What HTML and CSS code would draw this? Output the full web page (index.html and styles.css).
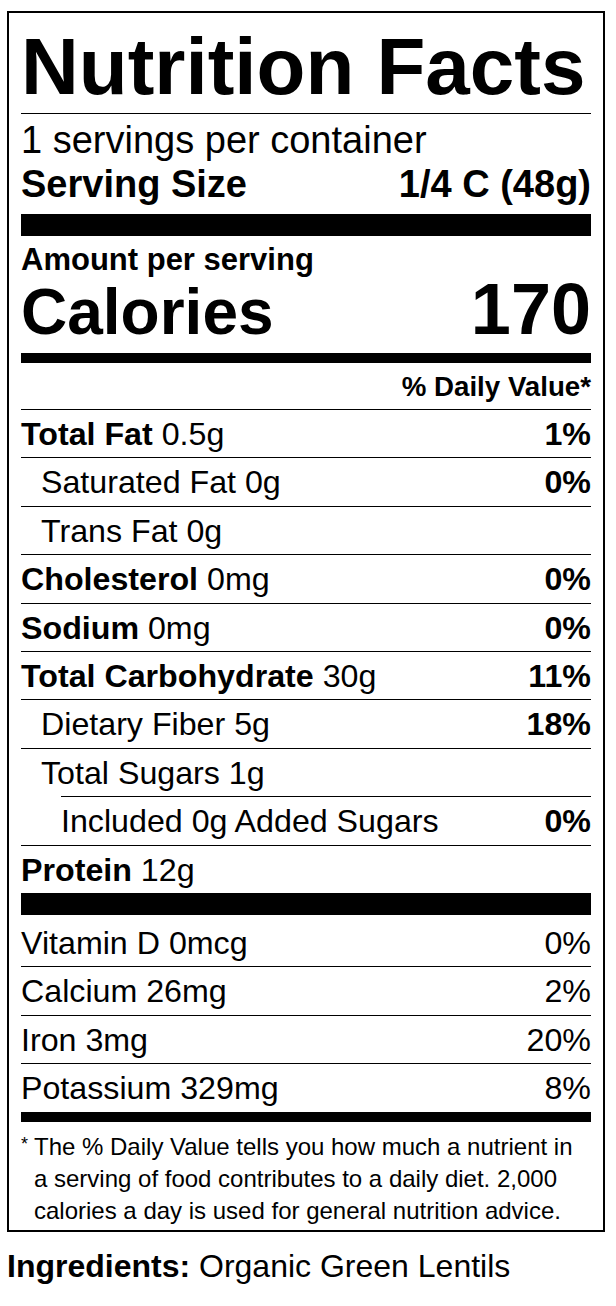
FILE: index.html
```html
<!DOCTYPE html>
<html lang="en">
<head>
<meta charset="utf-8">
<title>Nutrition Facts</title>
<link rel="stylesheet" href="styles.css">
</head>
<body>
<div class="page">
  <section class="label">
    <h1 class="title">Nutrition Facts</h1>
    <div class="servings">
      <div class="per">1 servings per container</div>
      <div class="size"><span>Serving Size</span><span>1/4 C (48g)</span></div>
    </div>
    <div class="calories">
      <div class="amount">Amount per serving</div>
      <div class="cal-row"><span class="cal-label">Calories</span><span class="cal-value">170</span></div>
    </div>
    <div class="dv-head">% Daily Value*</div>
    <div class="nutrients">
      <div class="row"><span><b>Total Fat</b> 0.5g</span><b>1%</b></div>
      <div class="row sub"><span>Saturated Fat 0g</span><b>0%</b></div>
      <div class="row sub"><span>Trans Fat 0g</span></div>
      <div class="row"><span><b>Cholesterol</b> 0mg</span><b>0%</b></div>
      <div class="row"><span><b>Sodium</b> 0mg</span><b>0%</b></div>
      <div class="row"><span><b>Total Carbohydrate</b> 30g</span><b>11%</b></div>
      <div class="row sub"><span>Dietary Fiber 5g</span><b>18%</b></div>
      <div class="row sub"><span>Total Sugars 1g</span></div>
      <div class="row subsub"><span>Included 0g Added Sugars</span><b>0%</b></div>
      <div class="row"><span><b>Protein</b> 12g</span></div>
    </div>
    <div class="vitamins">
      <div class="row"><span>Vitamin D 0mcg</span><span>0%</span></div>
      <div class="row"><span>Calcium 26mg</span><span>2%</span></div>
      <div class="row"><span>Iron 3mg</span><span>20%</span></div>
      <div class="row"><span>Potassium 329mg</span><span>8%</span></div>
    </div>
    <p class="footnote"><span class="star">*</span>The % Daily Value tells you how much a nutrient in a serving of food contributes to a daily diet. 2,000 calories a day is used for general nutrition advice.</p>
  </section>
  <p class="ingredients"><b>Ingredients:</b> Organic Green Lentils</p>
</div>
</body>
</html>
```

FILE: styles.css
```css
* {
  box-sizing: border-box;
  margin: 0;
  padding: 0;
}

html, body {
  background: #fff;
}

body {
  color: #000;
  font-family: "Liberation Sans", Arial, Helvetica, sans-serif;
}

.page {
  padding: 11px 0 0 7px;
}

.label {
  width: 598px;
  border: 2px solid #000;
  padding: 14px 12px 0;
}

.title {
  font-size: 80px;
  line-height: 80px;
  font-weight: 700;
  padding-bottom: 6px;
  border-bottom: 1px solid #000;
}

.servings {
  padding: 4px 0 8px;
  border-bottom: 22px solid #000;
  font-size: 38px;
  line-height: 44px;
}

.size {
  display: flex;
  justify-content: space-between;
  font-weight: 700;
}

.calories {
  padding: 7px 0 8px;
  border-bottom: 10px solid #000;
  font-weight: 700;
}

.amount {
  font-size: 31px;
  line-height: 34px;
}

.cal-row {
  display: flex;
  justify-content: space-between;
  align-items: baseline;
  line-height: 65px;
}

.cal-label {
  font-size: 64px;
}

.cal-value {
  font-size: 72px;
}

.dv-head {
  padding: 6px 0 4px;
  font-size: 27.7px;
  line-height: 36px;
  font-weight: 700;
  text-align: right;
}

.row {
  display: flex;
  justify-content: space-between;
  font-size: 32.2px;
  line-height: 46.4px;
  padding-top: 1px;
}

.row b {
  font-weight: 700;
}

.nutrients {
  border-bottom: 22px solid #000;
}

.nutrients .row {
  border-top: 1px solid #000;
}

.nutrients .sub {
  padding-left: 20px;
}

.nutrients .subsub {
  margin-left: 40px;
}

.vitamins {
  padding-top: 4px;
  border-bottom: 10px solid #000;
}

.vitamins .row + .row {
  border-top: 1px solid #000;
}

.footnote {
  padding: 9px 0 3px 13px;
  text-indent: -13px;
  font-size: 24px;
  line-height: 32px;
}

.star {
  display: inline-block;
  width: 13px;
  text-indent: 0;
  font-size: 18px;
  vertical-align: top;
  line-height: 26px;
}

.ingredients {
  margin-top: 14px;
  font-size: 32px;
  line-height: 40px;
}
```
